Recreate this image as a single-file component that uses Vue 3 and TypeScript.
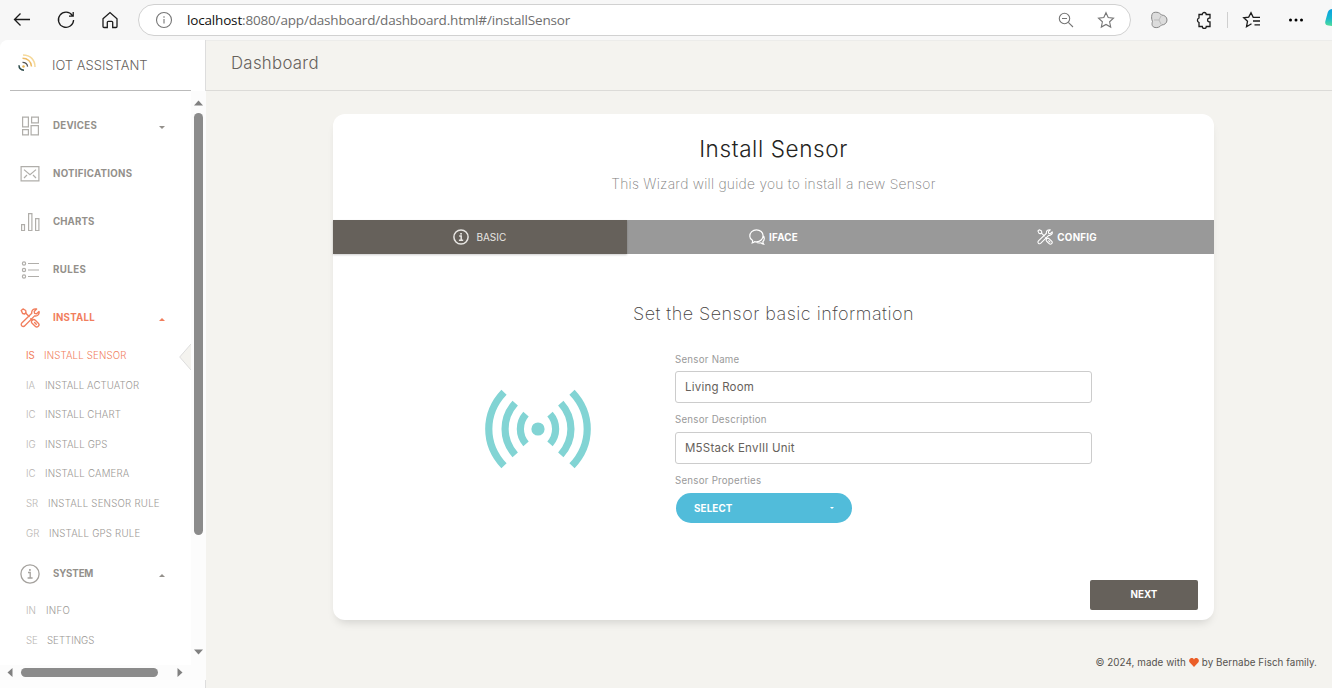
<script setup lang="ts">
interface SubItem { mini: string; label: string; active?: boolean; pad: number; ls: number }
interface NavItem { icon: string; label: string; ls: number; caret?: 'up' | 'down'; active?: boolean; children?: SubItem[] }

const nav: NavItem[] = [
  { icon: 'devices', label: 'DEVICES', ls: 0.25, caret: 'down' },
  { icon: 'mail', label: 'NOTIFICATIONS', ls: 0.27 },
  { icon: 'charts', label: 'CHARTS', ls: 0.1 },
  { icon: 'rules', label: 'RULES', ls: 0.4 },
  {
    icon: 'tools', label: 'INSTALL', ls: 0.25, caret: 'up', active: true,
    children: [
      { mini: 'IS', label: 'INSTALL SENSOR', active: true, pad: 18, ls: 0.15 },
      { mini: 'IA', label: 'INSTALL ACTUATOR', pad: 19, ls: 0.07 },
      { mini: 'IC', label: 'INSTALL CHART', pad: 19, ls: 0.1 },
      { mini: 'IG', label: 'INSTALL GPS', pad: 19, ls: 0.15 },
      { mini: 'IC', label: 'INSTALL CAMERA', pad: 19, ls: 0.17 },
      { mini: 'SR', label: 'INSTALL SENSOR RULE', pad: 22, ls: 0.22 },
      { mini: 'GR', label: 'INSTALL GPS RULE', pad: 23, ls: 0.2 },
    ],
  },
  {
    icon: 'info', label: 'SYSTEM', ls: -0.15, caret: 'up',
    children: [
      { mini: 'IN', label: 'INFO', pad: 20, ls: 0.3 },
      { mini: 'SE', label: 'SETTINGS', pad: 21, ls: 0 },
    ],
  },
]
</script>

<template>
  <div class="window">
    <svg class="defs" width="0" height="0">
      <symbol id="tools" viewBox="0 0 20 20">
        <g fill="none" stroke="currentColor" stroke-width="1.35" stroke-linejoin="round" stroke-linecap="round">
          <path d="M1.2 2.4 3 .9l2.7 1.6.3 2L4.700 6l-2.100-.5z" />
          <path d="m5.600 5.100 3.500 3.500M10.800 10.700l1.300 1.300" />
          <path d="M12.100 12.200c1-.9 2.400-.8 3.200 0l3 3c.9.900.9 2.200 0 3.100s-2.200.9-3.100 0l-3.100-3c-.8-.9-.8-2.200 0-3.100z" />
          <path d="m14.600 14.500 1.700 1.800" />
          <path d="M16.600 1 14.200 3.400l.4 2 2 .4 2.400-2.300c.7 2.500-1.400 5-4.400 4.400L4.800 17.800c-.8.900-2.100.9-2.900.1-.9-.8-.9-2.100-.1-3l10-9.600C11.200 2.400 13.700.3 16.600 1z" />
        </g>
      </symbol>
      <symbol id="info" viewBox="0 0 20 20">
        <g fill="none" stroke="currentColor" stroke-width="1.3">
          <circle cx="10" cy="10" r="9.100" />
          <path d="M8 8.500h2.200v5.300M7.600 14h5" />
        </g>
        <rect x="9" y="5.100" width="1.800" height="1.700" fill="currentColor" />
      </symbol>
      <symbol id="info-bold" viewBox="0 0 16 16">
        <g fill="none" stroke="currentColor" stroke-width="1.500">
          <circle cx="8" cy="8" r="7.100" />
          <path d="M6.200 7h2v4.300M5.900 11.300h4.300" />
        </g>
        <rect x="7.200" y="4" width="1.700" height="1.600" fill="currentColor" />
      </symbol>
    </svg>

    <header class="chrome">
      <svg class="ci" width="20" height="20" viewBox="0 0 20 20"><path d="M18 9.500H2.500M8.500 3.500l-6 6 6 6" /></svg>
      <svg class="ci" width="20" height="20" viewBox="0 0 20 20"><path d="M16.300 5.500a7.600 7.600 0 1 0 1.300 4.500M17.200 2v4.200H13" /></svg>
      <svg class="ci" width="20" height="20" viewBox="0 0 20 20"><path d="M3 8.700 10 2.500l7 6.200v7.800a1 1 0 0 1-1 1h-3.300v-5.200a1 1 0 0 0-1-1H8.300a1 1 0 0 0-1 1v5.200H4a1 1 0 0 1-1-1z" /></svg>
      <div class="url">
        <svg class="grey" width="18" height="18" viewBox="0 0 18 18"><circle cx="9" cy="9" r="7.500" /><path d="M9 8v4.500M9 5.300v1.400" /></svg>
        <span class="addr"><b>localhost</b>:8080/app/dashboard/dashboard.html#/installSensor</span>
        <svg class="grey" width="18" height="18" viewBox="0 0 18 18"><circle cx="7.500" cy="7.500" r="5.200" /><path d="m11.300 11.300 4.700 4.700M5 7.500h5" /></svg>
        <svg class="grey star" width="18" height="18" viewBox="0 0 18 18"><path d="m9 1.700 2.200 4.900 5.300.6-3.900 3.600 1.100 5.300L9 13.500l-4.700 2.600 1.100-5.300-3.900-3.600 5.300-.6z" /></svg>
      </div>
      <svg class="blob" width="18" height="18" viewBox="0 0 18 18"><g fill="#dcdcdc" stroke="#888" stroke-width="1"><path d="M2 3.500C2.200 1.700 4.500 1 7 1.300c2 .2 3.500 1.500 4.500 2.700 3 0 5.500 2 5.500 5s-2.500 5-5.500 5c-1.500 2-4 3-6.500 2.500-3-.6-3.500-3-2.500-6C1.500 8 1.300 6 2 3.500z" /></g><path d="M4 9h5l2-4M9 9l2 4" stroke="#bbb" fill="none" /></svg>
      <svg class="ci puzzle" width="18" height="18" viewBox="0 0 18 18"><path d="M4 3.500h3.200a2 2 0 0 1 4 0H15v3.700h-1a1.900 1.900 0 0 0 0 3.700h1v4.600h-3.700a2 2 0 0 1-4 0H4v-4a2.400 2.400 0 0 1 0-4.500z" /></svg>
      <i class="divider"></i>
      <svg class="ci favs" width="20" height="18" viewBox="0 0 20 18"><path d="M9.500 12.800 4.500 15.800l1-5.500-3.800-3.500 5-.7L9 1.800l2.200 4.500H18M11 10h7M12.500 13.800H18" /></svg>
      <svg class="dots" width="16" height="6" viewBox="0 0 16 6"><circle cx="2.500" cy="3" r="1.500" /><circle cx="8" cy="3" r="1.500" /><circle cx="13.500" cy="3" r="1.500" /></svg>
      <svg class="copilot" width="7" height="18" viewBox="0 0 7 18"><defs><linearGradient id="cg" x1="0" y1="0" x2="0" y2="1"><stop offset="0" stop-color="#0aa0e0" /><stop offset=".55" stop-color="#18b9cf" /><stop offset="1" stop-color="#52dc98" /></linearGradient></defs><path d="M7 0C4 .2 3 2 2.300 5L.4 12c-.8 3 .6 4.500 3 4.500L7 17z" fill="url(#cg)" /></svg>
    </header>

    <div class="page">
      <aside class="sidebar">
        <div class="brand">
          <svg width="18" height="18" viewBox="0 0 18 18" fill="none"><path d="M5 1c7.500 0 12 5 12 12" stroke="#f5d99b" stroke-width="1.500" /><path d="M4.500 4.300c5 0 8.800 3.200 9 8.200" stroke="#eebc66" stroke-width="1.500" /><path d="M4.500 8.300c2.800 0 4.800 1.600 5.100 4.300" stroke="#555" stroke-width="1.300" /><path d="M1 11.200c0 3 1.600 4.700 5 5" stroke="#2c4a4a" stroke-width="1.500" /><circle cx="5.500" cy="12.500" r="1.200" fill="#e8b34e" /></svg>
          <span>IOT ASSISTANT</span>
        </div>
        <div class="scroller">
          <nav class="menu">
            <template v-for="item in nav" :key="item.label">
              <div class="item" :class="{ active: item.active }">
                <svg v-if="item.icon === 'devices'" class="ico" viewBox="0 0 20 20"><path d="M2.600 1.100h5.800v9.800H2.600zM11.600 1.100h6.800v5.800h-6.800zM2.600 13.600h5.800v5.300H2.600zM11.100 9.600h7.300v9.300h-7.300z" /></svg>
                <svg v-else-if="item.icon === 'mail'" class="ico" viewBox="0 0 20 20"><path d="M1.100 2.600h17.800v14.300H1.100zM4 5.600l6 5 6-5M4 14l3-3M16 14l-3-3" /></svg>
                <svg v-else-if="item.icon === 'charts'" class="ico" viewBox="0 0 20 20"><path d="M1.600 12.600h2.900v5.900H1.600zM8.600 1.600h3.300v16.900H8.600zM15.600 6.600h3.300v11.900h-3.300z" /></svg>
                <svg v-else-if="item.icon === 'rules'" class="ico" viewBox="0 0 20 20"><circle cx="4" cy="3.500" r="1.600" /><circle cx="4" cy="10" r="1.600" /><circle cx="4" cy="16.500" r="1.600" /><path d="M8 3.500h11M8 10h11M8 16.500h11" /></svg>
                <svg v-else class="ico sym" viewBox="0 0 20 20"><use :href="'#' + item.icon" /></svg>
                <span class="lbl" :style="{ letterSpacing: item.ls + 'px' }">{{ item.label }}</span>
                <i v-if="item.caret" class="caret" :class="item.caret"></i>
              </div>
              <div v-if="item.children" class="subs">
                <div v-for="sub in item.children" :key="sub.label" class="sub" :class="{ active: sub.active }">
                  <span class="mini" :style="{ width: sub.pad + 'px' }">{{ sub.mini }}</span>
                  <span class="sublbl" :style="{ letterSpacing: sub.ls + 'px' }">{{ sub.label }}</span>
                  <svg v-if="sub.active" class="notch" width="12" height="26" viewBox="0 0 12 26"><path d="M12 0 .7 13 12 26" fill="#f4f3ef" stroke="#ddd" /></svg>
                </div>
              </div>
            </template>
          </nav>
          <div class="vbar">
            <svg width="9" height="6"><path d="M0 5.500 4.500.5 9 5.500z" /></svg>
            <i></i>
            <svg width="9" height="6"><path d="M0 .5h9L4.500 5.500z" /></svg>
          </div>
        </div>
        <div class="hbar">
          <svg width="6" height="9"><path d="M5.500 0v9L.5 4.500z" /></svg>
          <i></i>
          <svg width="6" height="9"><path d="M.5 0v9l5-4.500z" /></svg>
        </div>
      </aside>

      <main class="main">
        <div class="navbar"><span>Dashboard</span></div>
        <section class="card">
          <h3>Install Sensor</h3>
          <p class="tag">This Wizard will guide you to install a new Sensor</p>
          <div class="tabs">
            <div class="tab on"><svg width="16" height="16"><use href="#info-bold" /></svg><span>BASIC</span></div>
            <div class="tab"><svg width="16" height="16" viewBox="0 0 20 20" fill="none" stroke="currentColor" stroke-width="1.500"><path d="M4 17.500c.5-1.200.7-2.100.5-3C2.300 13.200 1 11.300 1 9c0-4.500 3.600-8 8.300-8s8.300 3.300 8.300 7.500-3.600 7.500-8.300 7.500c-.8 0-1.500-.1-2.200-.3C6.200 16.700 5.300 17.300 4 17.500zM17.500 8c1.200 1 1.600 2.500 1.600 4 0 2-.7 3-1.800 4 0 1 .3 2 1 2.800-1.500 0-2.700-.7-3.300-1.500-2.500.5-4.700.1-6-1.200" /></svg><span>IFACE</span></div>
            <div class="tab"><svg width="16" height="16"><use href="#tools" /></svg><span>CONFIG</span></div>
          </div>
          <h5>Set the Sensor basic information</h5>
          <div class="body">
            <svg class="signal" width="108" height="80" viewBox="0 0 108 80" fill="none" stroke="#82d4d4" stroke-width="7.200">
              <circle cx="54" cy="40" r="6.600" fill="#82d4d4" stroke="none" />
              <path d="M42 25.200c-7.500 8.500-7.500 21.100 0 29.600M31.200 14.200c-13.500 15.100-13.500 36.500 0 51.600M20 3.200C-.3 24.600-.3 55.400 20 76.800" />
              <path d="M66 25.200c7.500 8.500 7.500 21.100 0 29.600M76.800 14.200c13.500 15.100 13.500 36.500 0 51.600M88 3.200c20.300 21.400 20.300 52.200 0 73.600" />
            </svg>
            <form class="form">
              <label>Sensor Name</label>
              <div class="input">Living Room</div>
              <label>Sensor Description</label>
              <div class="input">M5Stack EnvIII Unit</div>
              <label>Sensor Properties</label>
              <div class="select"><span>SELECT</span><i></i></div>
            </form>
          </div>
          <div class="foot"><div class="next">NEXT</div></div>
        </section>
        <footer class="footer"><span>© 2024, made with</span><svg width="10" height="9" viewBox="0 0 10 9"><path d="M5 9 .8 4.600C-.3 3.400 0 1.300 1.300.5 2.700-.3 4.200.1 5 1.400 5.800.1 7.300-.3 8.700.5 10 1.300 10.300 3.400 9.200 4.600z" fill="#eb5e28" /></svg><span>by Bernabe Fisch family.</span></footer>
      </main>
    </div>
  </div>
</template>

<style>
body { margin: 0; background: #f7f7f7; overflow: hidden; }
</style>

<style scoped>
* { box-sizing: border-box; }
.window { width: 1332px; height: 688px; overflow: hidden; font-family: Inter, "Open Sans", sans-serif; display: flex; flex-direction: column; white-space: nowrap; }
.defs { position: absolute; }
.chrome { height: 40px; flex: none; display: flex; align-items: center; padding-left: 12px; background: #f7f7f7; }
.ci { fill: none; stroke: #1b1b1b; stroke-width: 1.3; flex: none; margin-right: 24px; }
.ci:nth-of-type(3) { margin-right: 18px; }
.url { width: 993px; height: 32px; flex: none; border: 1px solid #d1d1d1; border-radius: 16px; background: #fff; display: flex; align-items: center; padding: 0 15px 0 16px; }
.grey { fill: none; stroke: #767676; stroke-width: 1.1; flex: none; }
.star { margin-left: 22px; }
.addr { flex: 1; margin-left: 14px; font: 13.500px "Open Sans", sans-serif; color: #6e6e6e; letter-spacing: -0.17px; }
.addr b { font-weight: 400; color: #111; }
.blob { margin-left: 19px; flex: none; }
.puzzle { margin: 0 14px 0 27px; }
.divider { width: 1px; height: 16px; background: #cfcfcf; margin-right: 14px; flex: none; }
.favs { margin-right: 26px; }
.dots { flex: none; margin-right: 21px; }
.copilot { flex: none; margin-top: -4px; }

.page { flex: 1; display: flex; min-height: 0; background: #f4f3ef; border-top-left-radius: 8px; overflow: hidden; }
.sidebar { width: 206px; flex: none; background: #fdfdfd; border-right: 1px solid #ddd; display: flex; flex-direction: column; }
.brand { height: 51px; flex: none; display: flex; align-items: center; background: linear-gradient(#bbb, #bbb) 10px 50px / 181px 1px no-repeat #fff; padding-left: 18px; }
.brand svg { margin-top: -5px; }
.brand span { margin: -1px 0 0 16px; font-size: 13px; color: #66615b; font-weight: 300; }
.scroller { height: 574px; display: flex; flex: none; width: 206px; }
.menu { width: 191px; background: #fff; padding-top: 11px; overflow: hidden; }
.item { height: 48px; display: flex; align-items: center; padding: 0 26px 0 20px; color: #93908b; }
.active { color: #f17e5d !important; }
.ico { width: 20px; height: 20px; fill: none; stroke: #b0aeaa; stroke-width: 1.2; flex: none; margin-top: -1px; }
.ico.sym { stroke: none; color: #a5a29e; }
.active .ico.sym { color: #f17e5d; }
.lbl { flex: 1; margin: -1px 0 0 13px; font-size: 9.700px; font-weight: 700; }
.caret { width: 0; height: 0; border: 3px solid transparent; margin-top: 3px; }
.caret.down { border-top-color: currentColor; border-bottom: 0; }
.caret.up { border-bottom-color: currentColor; border-top: 0; }
.subs { margin: -1.200px 0 2.200px; }
.subs:last-child { margin-top: -2.400px; }
.sub { height: 29.600px; display: flex; align-items: center; padding-left: 26px; font-size: 9.700px; color: #9b9894; position: relative; }
.mini { color: #b8b5b2; font-weight: 300; }
.active .mini { color: inherit; font-weight: 400; }
.sublbl { font-weight: 350; }
.notch { position: absolute; right: 0; top: 3px; }
.vbar { width: 15px; background: #fcfcfc; display: flex; flex-direction: column; align-items: center; padding: 9px 0 10px; }
.vbar i { width: 9px; height: 422px; border-radius: 5px; background: #8b8b8b; margin: 7px 0 auto; }
.hbar { height: 15px; flex: none; display: flex; align-items: center; background: #fcfcfc; padding: 0 23px 0 7px; width: 206px; }
.hbar i { width: 137px; height: 9px; border-radius: 5px; background: #8b8b8b; margin: 0 auto 0 8px; }
.vbar svg, .hbar svg { fill: #808080; flex: none; }

.main { flex: 1; min-width: 0; display: flex; flex-direction: column; border-top: 1px solid #ececea; }
.navbar { height: 50px; border-bottom: 1px solid #dcdbd8; padding: 0 25px; line-height: 44px; font-size: 16.800px; font-weight: 350; letter-spacing: 0.3px; color: #66615b; flex: none; }
.card { width: 881px; height: 506px; flex: none; margin: 23px 0 0 127px; background: #fff; border-radius: 12px; box-shadow: 0 6px 10px -4px rgba(0, 0, 0, .15); display: flex; flex-direction: column; text-align: center; }
h3 { margin: 20px 0 0; height: 30px; line-height: 30px; font-size: 22.500px; font-weight: 350; letter-spacing: 0.6px; color: #252422; }
.tag { margin: 10px 0 0; height: 20px; line-height: 20px; font-size: 13.800px; font-weight: 200; letter-spacing: 0.27px; color: #7d7d7d; }
.tabs { height: 34px; margin-top: 26px; display: flex; background: #999; color: #fff; flex: none; }
.tab { flex: 1; display: flex; align-items: center; justify-content: center; font-size: 9.800px; font-weight: 700; letter-spacing: 0.25px; gap: 4px; }
.tab.on { background: #66615b; color: #e8e6e3; font-weight: 400; gap: 7px; font-size: 10px; letter-spacing: 0; box-shadow: 0 1px 2px rgba(0, 0, 0, .2); }
h5 { margin: 48px 0 0; height: 24px; line-height: 24px; font-size: 18px; font-weight: 200; letter-spacing: 0.47px; color: #45423e; }
.body { display: flex; text-align: left; margin-top: 26px; }
.signal { margin: 37px 83px 0 151px; flex: none; }
.form { width: 417px; display: flex; flex-direction: column; }
label { height: 14px; line-height: 14px; font-size: 9.700px; letter-spacing: 0.25px; color: #9a9a9a; }
label:first-child { line-height: 16px; }
.input { height: 32px; margin: 5px 0 10px; border: 1px solid #ccc; border-radius: 3px; padding-left: 9px; line-height: 30px; font-size: 11.500px; letter-spacing: 0.22px; color: #66615b; }
.select { width: 176px; height: 30px; margin: 5px 0 0 1px; border-radius: 15px; background: #51bcda; color: #fff; font-size: 9.800px; font-weight: 700; display: flex; align-items: center; justify-content: space-between; padding: 0 18px 0 18px; letter-spacing: 0.15px; }
.select i { width: 4px; height: 2px; background: #fff; clip-path: polygon(0 0, 100% 0, 50% 100%); }
.foot { margin-top: auto; padding: 0 16px 10px; display: flex; justify-content: flex-end; }
.next { width: 108px; height: 30px; line-height: 30px; border-radius: 2px; background: #66615b; color: #fff; font-size: 9.800px; font-weight: 700; }
.footer { margin: 34px 15px 0 auto; height: 16px; display: flex; align-items: center; gap: 3px; font-size: 9.800px; letter-spacing: 0.07px; color: #55524e; }
</style>
